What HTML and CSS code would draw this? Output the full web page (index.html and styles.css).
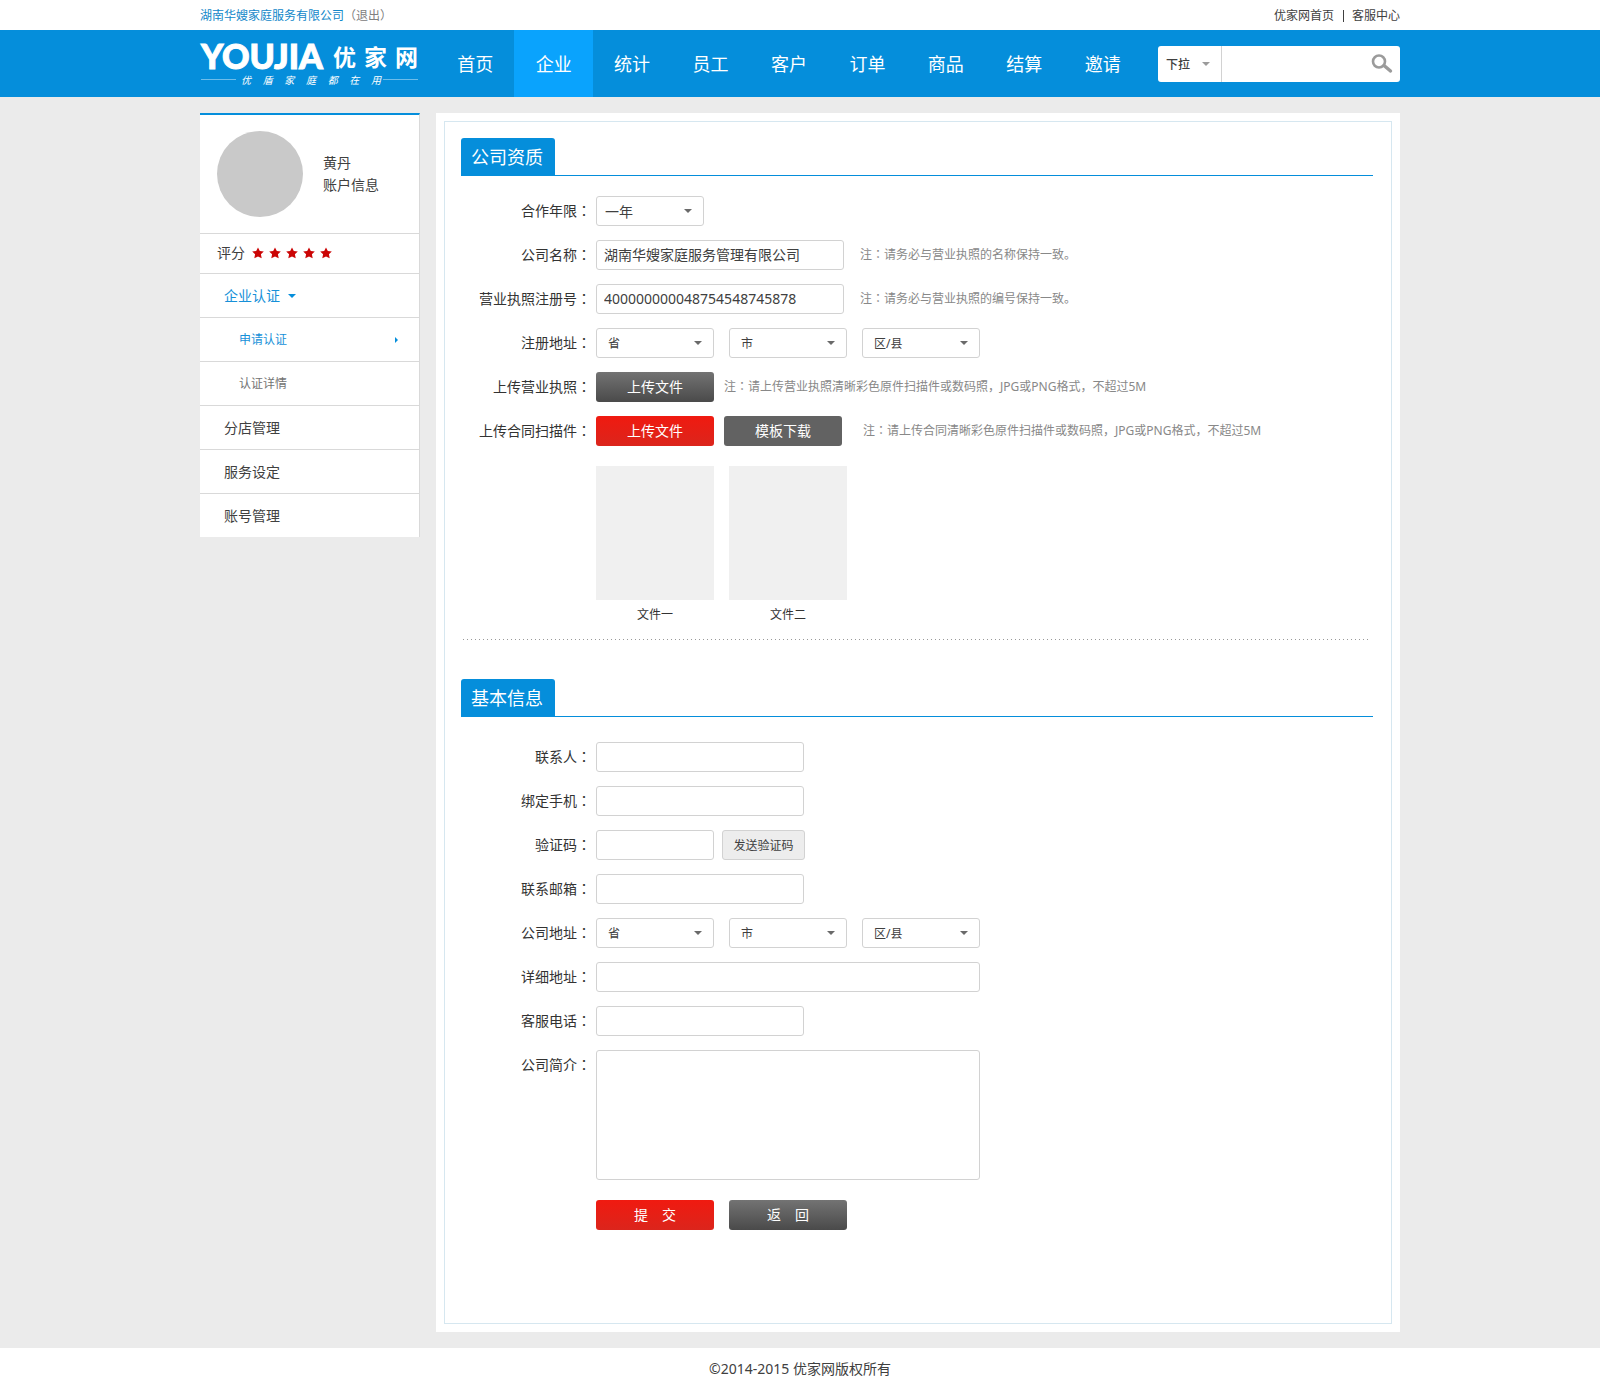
FILE: index.html
```html
<!DOCTYPE html>
<html lang="zh-CN">
<head>
<meta charset="utf-8">
<meta name="viewport" content="width=device-width, initial-scale=1">
<title>优家网 - 企业认证</title>
<link rel="stylesheet" href="styles.css">
</head>
<body>
<div class="topbar">
  <div class="container topbar-inner">
    <div class="account"><a class="company" href="#">湖南华嫂家庭服务有限公司</a><a class="logout" href="#">（退出）</a></div>
    <div class="toplinks"><a href="#">优家网首页</a><span class="bar"></span><a href="#">客服中心</a></div>
  </div>
</div>

<header class="header">
  <div class="container header-inner">
    <a class="logo" href="#">
      <span class="logo-name"><span class="logo-latin">YOUJIA</span><span class="logo-cjk"><span>优</span><span>家</span><span>网</span></span></span>
      <span class="logo-tag"><span class="logo-words"><span>优</span><span>盾</span><span>家</span><span>庭</span><span>都</span><span>在</span><span>用</span></span></span>
    </a>
    <nav class="nav">
      <a href="#">首页</a>
      <a class="active" href="#">企业</a>
      <a href="#">统计</a>
      <a href="#">员工</a>
      <a href="#">客户</a>
      <a href="#">订单</a>
      <a href="#">商品</a>
      <a href="#">结算</a>
      <a href="#">邀请</a>
    </nav>
    <form class="search">
      <span class="search-type"><select aria-label="搜索类型"><option>下拉</option></select></span>
      <input type="text" aria-label="搜索">
      <button type="button" aria-label="搜索">
        <svg width="22" height="20" viewBox="0 0 22 20" fill="none" stroke="#9b9b9b"><circle cx="8" cy="7.5" r="6" stroke-width="2.6"/><path d="M13 11.500 19.500 17" stroke-width="3.400" stroke-linecap="round"/></svg>
      </button>
    </form>
  </div>
</header>

<div class="container page">
  <aside class="sidebar">
    <div class="profile">
      <div class="avatar"></div>
      <div class="profile-text"><div>黄丹</div><div>账户信息</div></div>
    </div>
    <div class="rating">
      <span>评分</span>
      <svg width="82" height="12" viewBox="0 0 82 12" fill="#cb0505">
        <defs><path id="star" d="M6 .5 7.8 4l4 .5-2.900 2.700.8 4L6 9.400 2.300 11.200l.8-4L.2 4.500l4-.5z"/></defs>
        <use href="#star"/><use href="#star" x="17"/><use href="#star" x="34"/><use href="#star" x="51"/><use href="#star" x="68"/>
      </svg>
    </div>
    <ul class="menu">
      <li><a class="on" href="#">企业认证<i class="arrow-down"></i></a></li>
      <li><a class="sub on" href="#">申请认证<i class="arrow-right"></i></a></li>
      <li><a class="sub" href="#">认证详情</a></li>
      <li><a href="#">分店管理</a></li>
      <li><a href="#">服务设定</a></li>
      <li><a href="#">账号管理</a></li>
    </ul>
  </aside>

  <main class="main">
    <form class="panel">
      <section>
        <div class="section-head"><h2>公司资质</h2></div>
        <div class="rows">
          <div class="row">
            <label for="years">合作年限<span class="cn" lang="zh-TW">：</span></label>
            <span class="select years"><select id="years"><option>一年</option></select></span>
          </div>
          <div class="row">
            <label for="name">公司名称<span class="cn" lang="zh-TW">：</span></label>
            <input class="w-name" id="name" type="text" value="湖南华嫂家庭服务管理有限公司">
            <p class="note gap-m">注<span class="cn" lang="zh-TW">：</span>请务必与营业执照的名称保持一致。</p>
          </div>
          <div class="row">
            <label for="license">营业执照注册号<span class="cn" lang="zh-TW">：</span></label>
            <input class="w-name" id="license" type="text" value="400000000048754548745878">
            <p class="note gap-m">注<span class="cn" lang="zh-TW">：</span>请务必与营业执照的编号保持一致。</p>
          </div>
          <div class="row">
            <label for="reg-province">注册地址<span class="cn" lang="zh-TW">：</span></label>
            <div class="regions">
              <span class="select"><select id="reg-province"><option>省</option></select></span>
              <span class="select"><select aria-label="市"><option>市</option></select></span>
              <span class="select"><select aria-label="区/县"><option>区/县</option></select></span>
            </div>
          </div>
          <div class="row">
            <label for="up-license">上传营业执照<span class="cn" lang="zh-TW">：</span></label>
            <button class="btn dark" id="up-license" type="button">上传文件</button>
            <p class="note gap-s">注<span class="cn" lang="zh-TW">：</span>请上传营业执照清晰彩色原件扫描件或数码照，JPG或PNG格式，不超过5M</p>
          </div>
          <div class="row">
            <label for="up-contract">上传合同扫描件<span class="cn" lang="zh-TW">：</span></label>
            <button class="btn red" id="up-contract" type="button">上传文件</button>
            <button class="btn gray gap-s" type="button">模板下载</button>
            <p class="note gap-l">注<span class="cn" lang="zh-TW">：</span>请上传合同清晰彩色原件扫描件或数码照，JPG或PNG格式，不超过5M</p>
          </div>
        </div>
        <div class="files">
          <figure><div class="thumb"></div><figcaption>文件一</figcaption></figure>
          <figure><div class="thumb"></div><figcaption>文件二</figcaption></figure>
        </div>
        <div class="dots"></div>
      </section>

      <section class="basic">
        <div class="section-head"><h2>基本信息</h2></div>
        <div class="rows">
          <div class="row">
            <label for="contact">联系人<span class="cn" lang="zh-TW">：</span></label>
            <input class="w-mid" id="contact" type="text">
          </div>
          <div class="row">
            <label for="mobile">绑定手机<span class="cn" lang="zh-TW">：</span></label>
            <input class="w-mid" id="mobile" type="text">
          </div>
          <div class="row">
            <label for="code">验证码<span class="cn" lang="zh-TW">：</span></label>
            <input class="w-small" id="code" type="text">
            <button class="send" type="button">发送验证码</button>
          </div>
          <div class="row">
            <label for="email">联系邮箱<span class="cn" lang="zh-TW">：</span></label>
            <input class="w-mid" id="email" type="text">
          </div>
          <div class="row">
            <label for="province">公司地址<span class="cn" lang="zh-TW">：</span></label>
            <div class="regions">
              <span class="select"><select id="province"><option>省</option></select></span>
              <span class="select"><select aria-label="市"><option>市</option></select></span>
              <span class="select"><select aria-label="区/县"><option>区/县</option></select></span>
            </div>
          </div>
          <div class="row">
            <label for="address">详细地址<span class="cn" lang="zh-TW">：</span></label>
            <input class="w-wide" id="address" type="text">
          </div>
          <div class="row">
            <label for="phone">客服电话<span class="cn" lang="zh-TW">：</span></label>
            <input class="w-mid" id="phone" type="text">
          </div>
          <div class="row">
            <label for="intro">公司简介<span class="cn" lang="zh-TW">：</span></label>
            <textarea class="w-wide" id="intro"></textarea>
          </div>
        </div>
        <div class="actions">
          <button class="btn red" type="button">提　交</button>
          <button class="btn dark" type="button">返　回</button>
        </div>
      </section>
    </form>
  </main>
</div>

<footer class="footer">©2014-2015 优家网版权所有</footer>
</body>
</html>
```
FILE: styles.css
```css
* {
  box-sizing: border-box;
}

body {
  margin: 0;
  background: #ebebeb;
  color: #404040;
  font: 14px/22px "Noto Sans", "Noto Sans CJK SC", sans-serif;
}

a {
  color: inherit;
  text-decoration: none;
}

h2, p, ul, figure {
  margin: 0;
  padding: 0;
  font-weight: 400;
}

ul {
  list-style: none;
}

input, select, textarea, button {
  margin: 0;
  padding: 0;
  border: 0;
  border-radius: 0;
  background: none;
  color: inherit;
  font: inherit;
}

.container {
  max-width: 1200px;
  margin: 0 auto;
}

/* top bar */
.topbar {
  padding-top: 2px;
  background: #fff;
  font-size: 12px;
  line-height: 28px;
}

.topbar-inner {
  display: flex;
  justify-content: space-between;
}

.company {
  color: #1187c9;
}

.logout {
  color: #808080;
}

.toplinks {
  display: flex;
  align-items: center;
}

.bar {
  width: 1px;
  height: 12px;
  margin: 0 8px 0 9px;
  background: #404040;
}

/* header */
.header {
  background: #058edb;
  color: #fff;
}

.header-inner {
  display: flex;
  align-items: center;
  min-height: 67px;
}

.logo {
  width: 236px;
  padding: 2px 18px 0 1px;
}

.logo-name {
  display: flex;
  align-items: center;
  justify-content: space-between;
  height: 30px;
}

.logo-latin {
  font: 900 34px/30px Lato, sans-serif;
  -webkit-text-stroke: 1px #fff;
}

.logo-cjk {
  display: flex;
  gap: 8px;
  font: 700 23px/30px "Noto Sans CJK SC", sans-serif;
}

.logo-tag {
  display: flex;
  align-items: center;
  height: 18px;
  font: italic 10px/18px "Noto Sans CJK SC", sans-serif;
}

.logo-words {
  display: flex;
  flex: 1;
  justify-content: space-between;
  padding: 0 2px 0 5px;
}

.logo-tag::before,
.logo-tag::after {
  content: "";
  width: 35px;
  height: 1px;
  background: #6dbdea;
}

.nav {
  display: flex;
  flex: 1;
}

.nav a {
  flex: 1;
  padding-top: 2px;
  font-size: 18px;
  line-height: 65px;
  text-align: center;
}

.nav .active {
  background: #0aa3fd;
}

.search {
  display: flex;
  width: 242px;
  height: 36px;
  margin: 1px 0 0 16px;
  border-radius: 3px;
  background: #fff;
  color: #404040;
}

.search-type {
  position: relative;
  width: 64px;
  border-right: 1px solid #d2d2d2;
}

.search-type select {
  width: 100%;
  height: 36px;
  padding: 1px 0 0 8px;
  appearance: none;
  font-size: 12px;
  font-weight: 500;
}

.search-type::after,
.select::after {
  content: "";
  position: absolute;
  top: 50%;
  right: 11px;
  margin-top: -2px;
  border: 4px solid transparent;
  border-top-color: #6a6a6a;
  border-bottom: 0;
  pointer-events: none;
}

.search-type::after {
  border-top-color: #9b9b9b;
}

.search input {
  flex: 1;
  min-width: 0;
  padding: 0 8px;
}

.search button {
  display: flex;
  align-items: center;
  padding-right: 7px;
}

/* page */
.page {
  display: flex;
  align-items: flex-start;
  gap: 16px;
  padding: 16px 0;
}

.sidebar {
  width: 220px;
  border-top: 2px solid #058edb;
  border-right: 1px solid #d9d9d9;
  background: #fff;
}

.profile {
  display: flex;
  align-items: center;
  gap: 20px;
  padding: 16px 17px;
  border-bottom: 1px solid #d9d9d9;
}

.avatar {
  width: 86px;
  height: 86px;
  border-radius: 50%;
  background: #c9c9c9;
}

.rating {
  display: flex;
  align-items: center;
  gap: 7px;
  padding: 0 17px 2px;
  line-height: 37px;
}

.menu a {
  display: flex;
  align-items: center;
  padding-left: 24px;
  border-top: 1px solid #d9d9d9;
  line-height: 43px;
}

.menu .sub {
  padding: 0 21px 0 39px;
  color: #737373;
  font-size: 12px;
}

.menu .on {
  color: #1690d8;
}

.arrow-down {
  margin-left: 8px;
  border: 4px solid transparent;
  border-top-color: #058edb;
  border-bottom: 0;
}

.arrow-right {
  margin-left: auto;
  border: 3px solid transparent;
  border-left-color: #058edb;
  border-right: 0;
}

/* form panel */
.main {
  flex: 1;
  padding: 8px;
  background: #fff;
}

.panel {
  padding: 16px 18px 93px 16px;
  border: 1px solid #d6e7f0;
}

.section-head {
  display: flex;
  border-bottom: 1px solid #058edb;
}

.section-head h2 {
  padding: 2px 12px 0 10px;
  border-radius: 3px 3px 0 0;
  background: #058edb;
  color: #fff;
  font-size: 18px;
  line-height: 35px;
}

.rows {
  display: grid;
  gap: 14px;
  margin-top: 20px;
}

.row {
  display: flex;
  align-items: flex-start;
  line-height: 30px;
}

.row label {
  width: 130px;
  margin-right: 5px;
  color: #333;
  text-align: right;
}

/* colon centred in its square */
.cn {
  font-family: "Noto Sans CJK TC", sans-serif;
  line-height: 1;
}

.row input,
.row textarea,
.select {
  height: 30px;
  border: 1px solid #d2d2d2;
  border-radius: 3px;
  background: #fff;
}

.row input {
  padding: 0 7px;
}

.row textarea {
  display: block;
  height: 130px;
  padding: 4px 7px;
  resize: none;
}

.row .w-name {
  width: 248px;
}

.row .w-mid {
  width: 208px;
}

.row .w-small {
  width: 118px;
}

.row .w-wide {
  width: 384px;
}

.select {
  position: relative;
  width: 118px;
}

.select select {
  display: block;
  width: 100%;
  height: 28px;
  padding-left: 11px;
  appearance: none;
  font-size: 12px;
}

.select.years {
  width: 108px;
}

.years select {
  padding-left: 8px;
  font-size: 14px;
}

.regions {
  display: flex;
  gap: 15px;
}

.note {
  color: #888;
  font-size: 12px;
}

.gap-s {
  margin-left: 10px;
}

.gap-m {
  margin-left: 16px;
}

.gap-l {
  margin-left: 21px;
}

.btn {
  width: 118px;
  height: 30px;
  border-radius: 3px;
  color: #fff;
  line-height: 30px;
}

.dark {
  background: linear-gradient(#737373, #4a4a4a);
}

.red {
  background: linear-gradient(#f01a10, #db251c);
}

.gray {
  background: #626262;
}

.send {
  width: 83px;
  height: 30px;
  margin-left: 8px;
  border: 1px solid #d2d2d2;
  border-radius: 3px;
  background: #ededed;
  font-size: 12px;
}

.files {
  display: flex;
  gap: 15px;
  margin: 20px 0 0 135px;
}

.thumb {
  width: 118px;
  height: 134px;
  background: #f0f0f0;
}

.files figcaption {
  padding-top: 4px;
  color: #333;
  font-size: 12px;
  text-align: center;
}

.dots {
  height: 1px;
  margin: 13px 4px 0 2px;
  background: repeating-linear-gradient(90deg, #999 0 1px, transparent 1px 4px);
}

.basic {
  margin-top: 39px;
}

.basic .rows {
  margin-top: 25px;
}

.actions {
  display: flex;
  gap: 15px;
  margin: 20px 0 0 135px;
}

.footer {
  padding: 10px 0 6px;
  background: #fff;
  text-align: center;
}
```
